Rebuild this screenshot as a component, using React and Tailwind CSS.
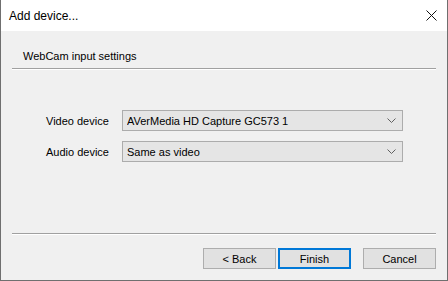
import React from "react";

function Chevron() {
  return (
    <svg width="9" height="6" viewBox="0 0 9 6" className="shrink-0">
      <path d="M0.5 0.5 L4.5 4.5 L8.5 0.5" fill="none" stroke="#606060" strokeWidth="1" />
    </svg>
  );
}

function Combo({ text }) {
  return (
    <div className="w-[281px] h-[21px] bg-[#e5e5e5] border border-[#acacac] flex items-center pl-[4px] pr-[6px]">
      <span className="flex-1 truncate">{text}</span>
      <Chevron />
    </div>
  );
}

function Button({ children, primary }) {
  return (
    <div
      className={
        "w-[73px] h-[21px] bg-[#e1e1e1] flex items-center justify-center " +
        (primary ? "border-2 border-[#0078d7]" : "border border-[#adadad]")
      }
    >
      {children}
    </div>
  );
}

export default function App() {
  return (
    <div
      className="w-[448px] h-[281px] flex flex-col border-l border-r border-b border-[#6f6f6f] text-[11px] leading-[16px] text-black"
      style={{ fontFamily: '"Liberation Sans", Arial, sans-serif' }}
    >
      <div className="h-[31px] bg-white flex items-center pl-[8px] pr-[10px] shrink-0">
        <span className="flex-1 text-[12px]">Add device...</span>
        <svg width="11" height="11" viewBox="0 0 11 11">
          <path d="M0.5 0.5 L10.5 10.5 M10.5 0.5 L0.5 10.5" stroke="#111" strokeWidth="1" />
        </svg>
      </div>
      <div className="flex-1 bg-[#f0f0f0] flex flex-col">
        <div className="pl-[22px] mt-[17px]">WebCam input settings</div>
        <div className="mx-[11px] mt-[4px]">
          <div className="h-px bg-[#a0a0a0]" />
          <div className="h-px bg-white" />
        </div>
        <div className="mt-[40px] flex flex-col gap-[10px] pl-[45px]">
          <div className="flex items-center">
            <span className="w-[76px]">Video device</span>
            <Combo text="AVerMedia HD Capture GC573 1" />
          </div>
          <div className="flex items-center">
            <span className="w-[76px]">Audio device</span>
            <Combo text="Same as video" />
          </div>
        </div>
        <div className="mx-[11px] mt-[71px]">
          <div className="h-px bg-[#a0a0a0]" />
          <div className="h-px bg-white" />
        </div>
        <div className="mt-[13px] flex justify-end pr-[11px]">
          <Button>&lt; Back</Button>
          <div className="w-[2px]" />
          <Button primary>Finish</Button>
          <div className="w-[12px]" />
          <Button>Cancel</Button>
        </div>
      </div>
    </div>
  );
}
